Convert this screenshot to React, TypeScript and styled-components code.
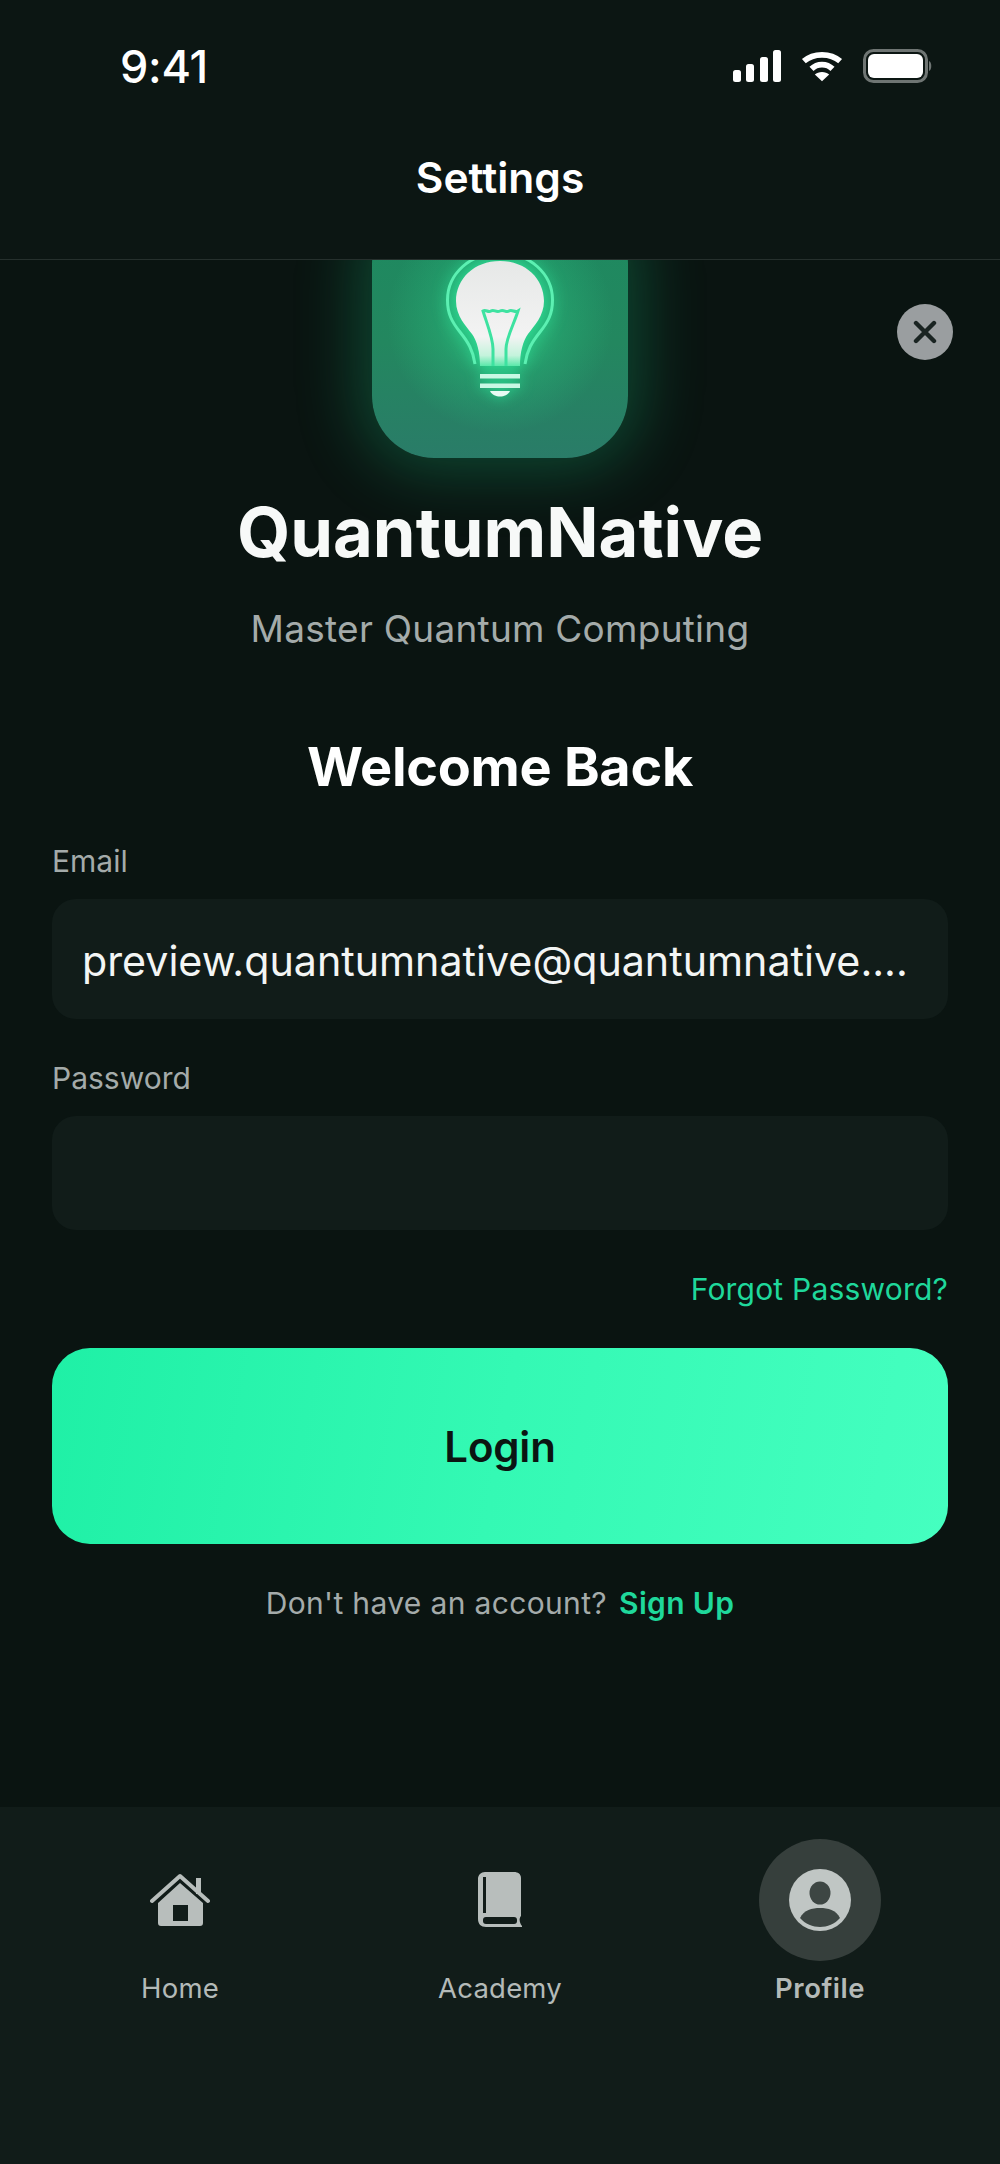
import styled, { createGlobalStyle } from 'styled-components';

const GlobalStyle = createGlobalStyle`
  html, body {
    margin: 0;
    padding: 0;
    background: #0a1411;
  }
  * {
    box-sizing: border-box;
  }
`;

const Screen = styled.div`
  display: flex;
  flex-direction: column;
  position: relative;
  width: 1000px;
  height: 2164px;
  overflow: hidden;
  background: #0a1411;
  font-family: Inter, 'Liberation Sans', sans-serif;
  color: #fff;
`;

const Top = styled.header`
  position: relative;
  z-index: 2;
  height: 260px;
  flex: none;
  background: #0c1613;
  border-bottom: 1px solid #26302d;
`;

const StatusBar = styled.div`
  display: flex;
  align-items: center;
  justify-content: space-between;
  height: 132px;
  padding: 0 68px 0 120px;
`;

const Clock = styled.span`
  font-size: 45px;
  font-weight: 500;
  letter-spacing: -0.3px;
`;

const StatusIcons = styled.div`
  display: flex;
  align-items: center;
  gap: 20px;
`;

const HeaderTitle = styled.h1`
  margin: 22px 0 0;
  font-size: 42.5px;
  line-height: 48px;
  font-weight: 600;
  text-align: center;
`;

const Main = styled.main`
  position: relative;
  flex: 1;
  display: flex;
  flex-direction: column;
  align-items: center;
  padding: 0 52px;
  overflow: hidden;
`;

const LogoTile = styled.div`
  display: flex;
  justify-content: center;
  align-items: flex-start;
  flex: none;
  width: 256px;
  height: 256px;
  margin-top: -58px;
  padding-top: 52px;
  border-radius: 62px;
  background:
    radial-gradient(circle at 50% 46%, rgba(52, 226, 146, 0.75) 0%, rgba(40, 190, 125, 0.35) 34%, rgba(40, 190, 125, 0) 60%),
    linear-gradient(180deg, #1d8a60 0%, #23875f 55%, #2a7c68 100%);
  box-shadow: 0 0 62px 14px rgba(20, 175, 115, 0.33);
`;

const CloseButton = styled.button`
  position: absolute;
  top: 44px;
  right: 47px;
  display: flex;
  align-items: center;
  justify-content: center;
  width: 56px;
  height: 56px;
  padding: 0;
  border: none;
  border-radius: 50%;
  background: #9a9ea0;
`;

const BrandName = styled.h2`
  margin: 33px 0 0;
  font-size: 68.7px;
  line-height: 82px;
  font-weight: 700;
  color: #f7f9f8;
`;

const Tagline = styled.p`
  margin: 32px 0 0;
  font-size: 37px;
  line-height: 48px;
  font-weight: 400;
  letter-spacing: 0.25px;
  color: #a4abaa;
`;

const Welcome = styled.h3`
  margin: 81px 0 0;
  font-size: 54px;
  line-height: 66px;
  font-weight: 700;
  letter-spacing: -0.3px;
  color: #fff;
`;

const Form = styled.form`
  display: flex;
  flex-direction: column;
  width: 100%;
  margin-top: 43px;
`;

const FieldLabel = styled.label<{ $gap: number }>`
  margin-top: ${(p) => p.$gap}px;
  font-size: 30px;
  line-height: 36px;
  color: #a4abaa;
`;

const Field = styled.div<{ $height: number }>`
  display: flex;
  align-items: center;
  height: ${(p) => p.$height}px;
  margin-top: 20px;
  padding: 3px 30px 0;
  border-radius: 24px;
  background: #111c19;
  font-size: 41.2px;
  color: #f3f5f4;
  white-space: nowrap;
`;

const ForgotLink = styled.a`
  align-self: flex-end;
  margin-top: 41px;
  font-size: 30px;
  line-height: 36px;
  letter-spacing: 0.2px;
  color: #1fd89b;
`;

const LoginButton = styled.button`
  height: 196px;
  margin-top: 41px;
  border: none;
  border-radius: 38px;
  background: linear-gradient(100deg, #1ff0a6 0%, #34f9b4 50%, #45ffc0 100%);
  font-family: inherit;
  font-size: 42px;
  font-weight: 600;
  letter-spacing: -0.2px;
  color: #0b1512;
`;

const SignUpRow = styled.p`
  display: flex;
  justify-content: center;
  gap: 12px;
  margin: 40px 0 0;
  font-size: 30px;
  line-height: 38px;
  letter-spacing: 0.35px;
  color: #a4abaa;
`;

const SignUpLink = styled.a`
  font-weight: 600;
  color: #1fd89b;
`;

const TabBar = styled.nav`
  display: grid;
  grid-template-columns: repeat(3, 1fr);
  flex: none;
  height: 357px;
  padding: 32px 20px 0;
  background: #111c19;
`;

const Tab = styled.a`
  display: flex;
  flex-direction: column;
  align-items: center;
`;

const TabIcon = styled.div<{ $active?: boolean }>`
  display: flex;
  align-items: center;
  justify-content: center;
  width: 122px;
  height: 122px;
  border-radius: 50%;
  background: ${(p) => (p.$active ? '#363f3c' : 'transparent')};
`;

const TabLabel = styled.span<{ $active?: boolean }>`
  margin-top: 9px;
  font-size: 27.5px;
  line-height: 36px;
  font-weight: ${(p) => (p.$active ? 600 : 400)};
  letter-spacing: ${(p) => (p.$active ? 0.5 : 0.2)}px;
  color: #b4bab8;
`;

const SignalIcon = () => (
  <svg width="48" height="32" viewBox="0 0 48 32" fill="#fff">
    <rect x="0" y="20" width="8" height="12" rx="2.5" />
    <rect x="13" y="14" width="8" height="18" rx="2.5" />
    <rect x="27" y="7" width="8" height="25" rx="2.5" />
    <rect x="40" y="0" width="8" height="32" rx="2.5" />
  </svg>
);

const WifiIcon = () => (
  <svg width="42" height="32" viewBox="0 0 44 32" fill="none" stroke="#fff" strokeWidth="6">
    <path d="M3 11 C13 2 31 2 41 11" />
    <path d="M11 19 C17 13 27 13 33 19" />
    <path d="M22 32 L14.5 25 C18 21.5 26 21.5 29.5 25 Z" fill="#fff" stroke="none" />
  </svg>
);

const BatteryIcon = () => (
  <svg width="69" height="34" viewBox="0 0 69 34">
    <rect x="1.5" y="1.5" width="62" height="31" rx="9" fill="none" stroke="#6f7573" strokeWidth="3" />
    <rect x="5" y="5" width="55" height="24" rx="6" fill="#fff" />
    <path d="M66 12 C69 13 69 21 66 22 Z" fill="#6f7573" />
  </svg>
);

const BulbIcon = () => (
  <svg width="108" height="144" viewBox="0 0 108 144" overflow="visible" style={{ filter: 'drop-shadow(0 0 7px #2ee59a)' }}>
    <defs>
      <linearGradient id="bulbFill" x1="0" y1="0" x2="0" y2="1">
        <stop offset="0" stopColor="#e6e8e7" />
        <stop offset="0.72" stopColor="#f3f3f3" />
        <stop offset="0.9" stopColor="#c4f3dc" />
        <stop offset="1" stopColor="#5ae8aa" />
      </linearGradient>
    </defs>
    <path
      d="M54 7 C80 7 98 25 98 47 C98 62 88 72 82 80 C77 87 74 98 74 112 L34 112 C34 98 31 87 26 80 C20 72 10 62 10 47 C10 25 28 7 54 7 Z"
      fill="url(#bulbFill)"
    />
    <path
      d="M29 110 C27 96 22 88 14 78 C6 68 1.5 60 1.5 46 C1.5 20 24 -1 54 -1 C84 -1 106.5 20 106.5 46 C106.5 60 102 68 94 78 C86 88 81 96 79 110"
      fill="none"
      stroke="#5cf0b2"
      strokeWidth="3"
    />
    <path
      d="M47 112 L47 95 C47 84 41 70 37 57 C40 55 42 59 45 57 C48 55 50 59 54 57 C58 55 60 59 63 57 C66 55 69 59 72 57 C68 70 60 84 60 95 L60 112"
      fill="none"
      stroke="#3de2a0"
      strokeWidth="3"
    />
    <rect x="34" y="120" width="40" height="4.5" fill="#c9f8e4" />
    <rect x="34" y="129.5" width="40" height="4.5" fill="#c9f8e4" />
    <path d="M44 137 L64 137 C62 141 58 142.5 54 142.5 C50 142.5 46 141 44 137 Z" fill="#e8fbf3" />
  </svg>
);

const CloseIcon = () => (
  <svg width="24" height="24" viewBox="0 0 24 24" stroke="#1a2422" strokeWidth="4.4" strokeLinecap="round">
    <path d="M3 3 L21 21 M21 3 L3 21" />
  </svg>
);

const HomeIcon = () => (
  <svg width="60" height="54" viewBox="0 0 60 54" fill="#b8bebc">
    <path d="M2 28 L30 3 L58 28" fill="none" stroke="#b8bebc" strokeWidth="4" strokeLinecap="round" strokeLinejoin="round" />
    <rect x="46" y="5" width="5" height="16" />
    <path
      fillRule="evenodd"
      d="M30 10 L53 30 L53 50 Q53 53 50 53 L11 53 Q8 53 8 50 L8 30 Z M23 32 L23 48 L38 48 L38 32 Z"
    />
  </svg>
);

const BookIcon = () => (
  <svg width="44" height="56" viewBox="0 0 44 56">
    <path
      d="M7 0 L36 0 C40 0 43 2 43 6 L43 44 C41 46 41 50 44 54 L44 55 L8 55 C3 55 0 52 0 47 L0 7 C0 3 3 0 7 0 Z"
      fill="#b8bebc"
    />
    <rect x="5" y="5" width="3" height="36" fill="#111c19" />
    <rect x="5" y="45" width="34" height="7" rx="3" fill="#111c19" />
  </svg>
);

const ProfileIcon = () => (
  <svg width="62" height="62" viewBox="0 0 62 62">
    <circle cx="31" cy="31" r="31" fill="#c0c6c4" />
    <ellipse cx="31" cy="24" rx="10.5" ry="11.5" fill="#3d4643" />
    <path d="M11 49 C15 41 23 39 31 39 C39 39 47 41 51 49 C46 55 38 58 31 58 C24 58 16 55 11 49 Z" fill="#3d4643" />
  </svg>
);

const App = () => {
  return (
    <Screen>
      <GlobalStyle />
      <Top>
        <StatusBar>
          <Clock>9:41</Clock>
          <StatusIcons>
            <SignalIcon />
            <WifiIcon />
            <BatteryIcon />
          </StatusIcons>
        </StatusBar>
        <HeaderTitle>Settings</HeaderTitle>
      </Top>
      <Main>
        <LogoTile>
          <BulbIcon />
        </LogoTile>
        <CloseButton type="button" aria-label="Close">
          <CloseIcon />
        </CloseButton>
        <BrandName>QuantumNative</BrandName>
        <Tagline>Master Quantum Computing</Tagline>
        <Welcome>Welcome Back</Welcome>
        <Form>
          <FieldLabel $gap={0}>Email</FieldLabel>
          <Field $height={120}>preview.quantumnative@quantumnative....</Field>
          <FieldLabel $gap={41}>Password</FieldLabel>
          <Field $height={114} />
          <ForgotLink>Forgot Password?</ForgotLink>
          <LoginButton type="button">Login</LoginButton>
          <SignUpRow>
            Don't have an account?
            <SignUpLink>Sign Up</SignUpLink>
          </SignUpRow>
        </Form>
      </Main>
      <TabBar>
        <Tab>
          <TabIcon>
            <HomeIcon />
          </TabIcon>
          <TabLabel>Home</TabLabel>
        </Tab>
        <Tab>
          <TabIcon>
            <BookIcon />
          </TabIcon>
          <TabLabel>Academy</TabLabel>
        </Tab>
        <Tab>
          <TabIcon $active>
            <ProfileIcon />
          </TabIcon>
          <TabLabel $active>Profile</TabLabel>
        </Tab>
      </TabBar>
    </Screen>
  );
};

export default App;
